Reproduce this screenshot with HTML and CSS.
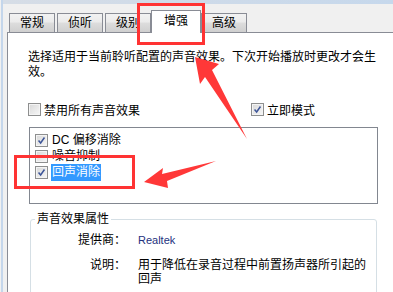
FILE: index.html
```html
<!DOCTYPE html>
<html lang="zh-CN">
<head>
  <meta charset="UTF-8">
  <title>声音效果 - 增强</title>
  <link rel="stylesheet" href="styles.css">
</head>
<body>
  <div class="window">
    <div class="strip"></div>

    <div class="tabs">
      <div class="tab">常规</div>
      <div class="tab">侦听</div>
      <div class="tab">级别</div>
      <div class="tab active">增强</div>
      <div class="tab">高级</div>
    </div>

    <div class="panel">
      <p class="intro">选择适用于当前聆听配置的声音效果。下次开始播放时更改才会生效。</p>

      <div class="opts">
        <label class="check"><span class="box"></span>禁用所有声音效果</label>
        <label class="check"><span class="box on"><svg viewBox="0 0 13 13"><path d="M3 6.5 L5.5 9.5 L10 3"/></svg></span>立即模式</label>
      </div>

      <div class="list">
        <div class="item"><span class="box on"><svg viewBox="0 0 13 13"><path d="M3 6.5 L5.5 9.5 L10 3"/></svg></span><span class="name">DC 偏移消除</span></div>
        <div class="item"><span class="box"></span><span class="name">噪音抑制</span></div>
        <div class="item"><span class="box on"><svg viewBox="0 0 13 13"><path d="M3 6.5 L5.5 9.5 L10 3"/></svg></span><span class="name selected">回声消除</span></div>
      </div>

      <fieldset class="props">
        <legend>声音效果属性</legend>
        <div class="prop">
          <span class="key">提供商：</span>
          <span class="val vendor">Realtek</span>
        </div>
        <div class="prop">
          <span class="key">说明：</span>
          <span class="val">用于降低在录音过程中前置扬声器所引起的回声</span>
        </div>
      </fieldset>
    </div>
  </div>

  <!-- annotations -->
  <div class="mark mark-tab"></div>
  <div class="mark mark-item"></div>
  <svg class="arrows" viewBox="0 0 393 292" width="393" height="292">
    <polygon points="195,57 219,64 212,70 247,139 205,77 200,84"/>
    <polygon points="144,182 163,168 162,174 216,161 167,181 168,188"/>
  </svg>
</body>
</html>
```

FILE: styles.css
```css
* {
  margin: 0;
  padding: 0;
  box-sizing: border-box;
}
body {
  font-family: "Liberation Sans", "Noto Sans CJK SC", sans-serif;
  font-size: 12px;
  color: #000;
  background: #f0f0f0;
  width: 393px;
  height: 292px;
  overflow: hidden;
  position: relative;
}
.window {
  margin-left: 1px;
  border-left: 2px solid #c4d6eb;
  height: 292px;
}
.strip {
  height: 4px;
  background: linear-gradient(90deg, #d6dde6, #c6d8ec);
}
.tabs {
  display: flex;
  align-items: flex-end;
  gap: 2px;
  height: 28px;
  padding-left: 6px;
}
.tab {
  height: 19px;
  padding: 0 10px;
  line-height: 18px;
  border: 1px solid #898c95;
  border-bottom: none;
  background: linear-gradient(#f2f2f2, #ebebeb 45%, #dddddd 50%, #cfcfcf);
}
.tab.active {
  height: 23px;
  margin: 0 -2px -1px;
  padding: 0 12px;
  line-height: 20px;
  background: #fff;
  position: relative;
  z-index: 1;
}
.panel {
  margin-left: 4px;
  height: 260px;
  overflow: hidden;
  border: 1px solid #898c95;
  border-right: none;
  border-bottom: none;
  background: #fff;
  padding: 17px 0 0 20px;
}
.intro {
  width: 352px;
  line-height: 15px;
}
.opts {
  display: grid;
  grid-template-columns: 223px auto;
  margin-top: 23px;
}
.check {
  display: flex;
  align-items: center;
  gap: 3px;
  height: 13px;
}
.box {
  width: 13px;
  height: 13px;
  flex: none;
  border: 1px solid #8e8f8f;
  background: linear-gradient(135deg, #d8d8d8, #f7f7f7);
  box-shadow: inset 0 0 0 1px #f4f4f4;
}
.box svg {
  display: block;
  width: 11px;
  height: 11px;
}
.box path {
  fill: none;
  stroke: #3d5598;
  stroke-width: 1.8;
}
.list {
  margin: 11px 0 0 1px;
  width: 349px;
  height: 77px;
  border: 1px solid #828790;
  padding: 4px 0 0 5px;
}
.item {
  display: flex;
  align-items: center;
  height: 16px;
}
.item .name {
  margin-left: 3px;
  padding: 0 1px;
  line-height: 17px;
}
.item .selected {
  background: #3399ff;
  color: #fff;
}
.props {
  margin: 10px 0 0 2px;
  width: 347px;
  height: 120px;
  border: 1px solid #d5dfe5;
  border-radius: 3px;
  padding: 9px 0 0;
}
.props legend {
  margin-left: 4px;
  padding: 0 2px;
  line-height: 10px;
}
.prop {
  display: flex;
  gap: 12px;
  line-height: 14px;
  margin-bottom: 11px;
}
.prop .key {
  width: 95px;
  text-align: right;
}
.prop .val {
  width: 236px;
}
.vendor {
  font-family: "Liberation Sans", sans-serif;
  font-size: 11px;
  color: #23317e;
}
.mark {
  position: absolute;
  border: 3px solid #ff3333;
}
.mark-tab {
  left: 137px;
  top: 3px;
  width: 68px;
  height: 42px;
}
.mark-item {
  left: 14px;
  top: 155px;
  width: 121px;
  height: 34px;
}
.arrows {
  position: absolute;
  left: 0;
  top: 0;
  pointer-events: none;
}
.arrows polygon {
  fill: #ff3838;
}
```
